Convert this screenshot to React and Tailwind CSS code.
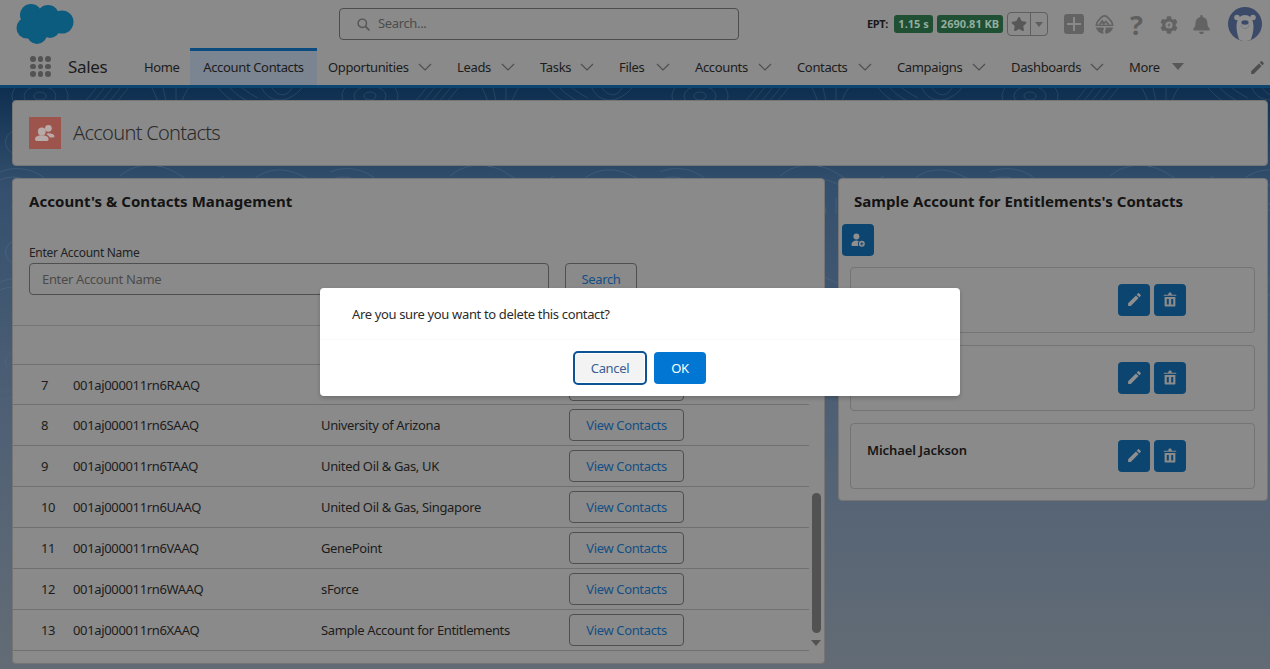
import React from "react";
import { FaBell, FaCog, FaStar } from "react-icons/fa";
import { MdEdit } from "react-icons/md";

const F = "font-['Noto_Sans','Open_Sans',sans-serif]";

function Chevron() {
  return (
    <svg width="14" height="8" viewBox="0 0 14 8" className="mt-[1px] shrink-0">
      <path d="M1 1l6 6 6-6" fill="none" stroke="#4f4f4f" strokeWidth="1.2" />
    </svg>
  );
}

function Logo() {
  return (
    <svg width="76" height="46" viewBox="0 0 76 46" className="shrink-0" fill="#0b5c7f">
      <circle cx="31" cy="14" r="11" />
      <circle cx="48" cy="15" r="11" />
      <circle cx="62" cy="21" r="11.5" />
      <circle cx="27" cy="27" r="10.5" />
      <circle cx="37" cy="33" r="10" />
      <circle cx="50" cy="27" r="10" />
      <rect x="28" y="14" width="30" height="16" />
    </svg>
  );
}

function Trailhead() {
  return (
    <svg width="19" height="19" viewBox="0 0 19 19" className="shrink-0">
      <path d="M9.5 0c2.6 0 3.7 1.8 5.6 3.7 2 2 3.4 4 3.4 7.3H.5c0-3.300 1.400-5.300 3.400-7.300C5.800 1.800 6.900 0 9.500 0z" fill="#626262" />
      <path d="M9.500 1.800c1.800 0 2.800 1.400 4.300 3 1.600 1.700 2.700 3 2.900 4.900H2.300c.2-1.900 1.300-3.200 2.900-4.900 1.500-1.600 2.500-3 4.300-3z" fill="#8a8a8a" />
      <path d="M3.500 9.700L7.300 4.600l1.800 2.600 1.500-2 4.500 4.500h-2.400L10.600 7.600 9.300 9.700H8L7.200 7.800 5.800 9.700z" fill="#626262" />
      <path d="M.8 12.500h7.700l.4 2.200-.9.500.6 3.500C4.900 18.400 2 16.300.8 12.500zM10.500 12.500h7.700c-1.200 3.800-4.100 5.900-7.800 6.200l-.4-3.500.9-.5z" fill="#626262" />
    </svg>
  );
}

function Bear() {
  return (
    <svg width="34" height="34" viewBox="0 0 34 34" className="shrink-0">
      <circle cx="17" cy="17" r="17" fill="#3b4a68" />
      <circle cx="9" cy="10.500" r="2.800" fill="#8f8f8f" />
      <circle cx="25" cy="10.500" r="2.800" fill="#8f8f8f" />
      <path d="M8.500 20c0-8 3.500-12 8.500-12s8.500 4 8.500 12c0 5-1.500 9-2.500 12.500-2 1-4 1.500-6 1.500s-4-.5-6-1.500C10 29 8.500 25 8.500 20z" fill="#8f8f8f" />
      <ellipse cx="17" cy="15.500" rx="3.600" ry="2.200" fill="#3b4a68" />
      <path d="M13 17.500c.5 3 2 4 4 4s3.500-1 4-4" fill="none" stroke="#6d7687" strokeWidth="0.8" />
    </svg>
  );
}

function Gear() {
  return (
    <div className="relative h-[18px] w-[18px]">
      <FaCog size={18} color="#626262" />
      <svg width="18" height="18" viewBox="0 0 18 18" className="absolute left-0 top-0">
        <circle cx="9" cy="9" r="3.600" fill="#8a8a8a" />
        <path d="M9.800 6.400L7.300 9.600h1.500L8.200 11.700l2.500-3.200H9.200z" fill="#626262" />
      </svg>
    </div>
  );
}

function Trash() {
  return (
    <svg width="14" height="15" viewBox="0 0 14 15">
      <path d="M5.200 1.500h3.600v1.200h3.900c.4 0 .6.3.6.6v.4H.7v-.4c0-.3.2-.6.6-.6h3.900z M5.900.6h2.200v.9H5.900z" fill="#8b8b8b" />
      <path fillRule="evenodd" d="M1.600 5h10.800v8.400c0 .7-.5 1.200-1.200 1.200H2.800c-.7 0-1.200-.5-1.200-1.200zM3.800 7v5.400h2V7zm4.400 0v5.400h2V7z" fill="#8b8b8b" />
    </svg>
  );
}

function AddContact() {
  return (
    <svg width="14" height="14" viewBox="0 0 14 14">
      <circle cx="5.400" cy="3.600" r="3" fill="#8f8f8f" />
      <path d="M.4 12c0-2.600 2-4.400 5-4.400 1 0 1.800.2 2.400.5-.6.8-.9 1.700-.9 2.700 0 .8.2 1.500.6 2.100H1.400c-.6 0-1-.3-1-.9z" fill="#8f8f8f" />
      <circle cx="10.800" cy="10.800" r="3" fill="#8f8f8f" />
      <path d="M10.800 9.200v3.200M9.200 10.800h3.200" stroke="#0c4570" strokeWidth="0.9" />
    </svg>
  );
}

function People() {
  return (
    <svg width="20" height="18" viewBox="0 0 20 18">
      <circle cx="13.400" cy="4.300" r="3.400" fill="#b8aaa8" />
      <path d="M13 9.200c3.500 0 6.500 1.300 6.500 3 0 .8-.6 1.200-1.400 1.200h-3.400c-.6-1.400-1.800-2.400-3.200-3.200.4-.5 1-1 1.500-1z" fill="#b8aaa8" />
      <circle cx="6.800" cy="7.400" r="3.900" fill="#b8aaa8" />
      <path d="M0 15.200c0-2.600 3-4 6.800-4s6.800 1.400 6.800 4c0 1.200-1 1.800-2 1.800H2c-1 0-2-.6-2-1.800z" fill="#b8aaa8" />
    </svg>
  );
}

function IconBtn({ children }) {
  return (
    <button className="flex h-8 w-8 items-center justify-center rounded-[4px] bg-[#0c4570]">
      {children}
    </button>
  );
}

function NavItem({ label, w }) {
  return (
    <div className={`flex h-full items-center justify-between pl-[11px] pr-[14px] ${w}`}>
      <span className="whitespace-nowrap pt-[2px]">{label}</span>
      <Chevron />
    </div>
  );
}

function ContactCard({ name }) {
  return (
    <div className="flex h-[66px] w-[405px] items-start justify-between rounded-[4px] border border-[#747474] pl-4 pr-[68px] pt-4">
      <div className="pt-[1px] text-[13px] font-semibold tracking-[-0.1px] text-[#161616]">{name}</div>
      <div className="flex gap-1">
        <IconBtn><MdEdit size={17} color="#8f8f8f" /></IconBtn>
        <IconBtn><Trash /></IconBtn>
      </div>
    </div>
  );
}

const rows = [
  ["7", "001aj000011rn6RAAQ", ""],
  ["8", "001aj000011rn6SAAQ", "University of Arizona"],
  ["9", "001aj000011rn6TAAQ", "United Oil & Gas, UK"],
  ["10", "001aj000011rn6UAAQ", "United Oil & Gas, Singapore"],
  ["11", "001aj000011rn6VAAQ", "GenePoint"],
  ["12", "001aj000011rn6WAAQ", "sForce"],
  ["13", "001aj000011rn6XAAQ", "Sample Account for Entitlements"],
];

function Contours() {
  return (
    <svg className="absolute left-0 top-0 h-[581px] w-[1270px]" viewBox="0 0 1270 581">
      <defs>
        <pattern id="topo" width="330" height="110" patternUnits="userSpaceOnUse">
          <g fill="none" stroke="#ffffff" strokeOpacity="0.09" strokeWidth="1">
            <ellipse cx="40" cy="8" rx="16" ry="10" />
            <ellipse cx="40" cy="8" rx="28" ry="18" />
            <ellipse cx="40" cy="8" rx="6" ry="4" />
            <path d="M85 14l16-20M93 14l16-20M101 14l16-20M109 14l16-20M117 14l16-20" />
            <path d="M150-4c4 8 8 16 8 20M162-4c2 8 4 16 4 20M176-2v18M190-2c-6 8-8 14-8 18" />
            <path d="M215-4c8 10 16 18 26 20M226-4c8 8 14 14 24 18M238-4c6 6 12 10 20 14" />
            <path d="M262 0c6 14 24 18 40 0M272 0c6 8 14 10 20 0" />
            <path d="M10 45c10-8 24-10 34 0s4 26-14 26S-2 56 10 45zM20 50c6-4 14-4 16 2s-2 12-10 12-12-8-6-14z" />
            <path d="M0 92c14-6 26-2 36 6s22 10 34 4M0 84c14-6 32-4 44 6s20 10 32 6" />
            <path d="M120 88c16-14 40-14 58-2s30 12 46 2M136 100c12-10 30-12 44-2s30 14 48 6" />
            <circle cx="120" cy="70" r="5" />
            <circle cx="160" cy="76" r="2.500" />
            <path d="M250 96c10-14 30-18 48-10s26 12 32 10M262 106c10-10 24-12 36-6s20 8 32 6" />
          </g>
        </pattern>
        <linearGradient id="fade" x1="0" y1="0" x2="0" y2="1">
          <stop offset="0" stopColor="#fff" stopOpacity="1" />
          <stop offset="0.3" stopColor="#fff" stopOpacity="0.75" />
          <stop offset="0.65" stopColor="#fff" stopOpacity="0" />
        </linearGradient>
        <mask id="m"><rect width="1270" height="581" fill="url(#fade)" /></mask>
      </defs>
      <rect width="1270" height="581" fill="url(#topo)" mask="url(#m)" />
    </svg>
  );
}

export default function App() {
  return (
    <div className={`${F} relative h-[669px] w-[1270px] overflow-hidden bg-[#8a8a8a] text-[13px] tracking-[-0.35px] text-[#1c1c1c]`}>
      {/* top bar */}
      <header className="flex h-[48px] items-center">
        <Logo />
        <div className="ml-[263px] flex h-8 w-[400px] items-center rounded-[4px] border border-[#4d4d4d] pl-[17px] text-[#4c4c4c]">
          <svg width="13" height="13" viewBox="0 0 13 13" className="mr-[8px] mt-[1px]">
            <circle cx="5.300" cy="5.300" r="4.200" fill="none" stroke="#555" strokeWidth="1.400" />
            <path d="M8.400 8.400l4 4" stroke="#555" strokeWidth="1.500" />
          </svg>
          <span>Search...</span>
        </div>
        <div className="ml-[128px] flex items-center">
          <span className="text-[11px] font-bold text-[#1a1a1a]">EPT:</span>
          <span className="ml-[6px] flex h-[18px] w-[39px] items-center justify-center rounded-[3px] bg-[#1f5033] text-[11px] font-bold tracking-normal text-[#93ad9f]">1.15 s</span>
          <span className="ml-[4px] flex h-[18px] w-[66px] items-center justify-center rounded-[3px] bg-[#1f5033] text-[11px] font-bold tracking-normal text-[#93ad9f]">2690.81 KB</span>
          <div className="ml-[4px] flex h-6 w-[41px] rounded-[4px] border border-[#5f5f5f]">
            <div className="flex w-[23px] items-center justify-center border-r border-[#5f5f5f]">
              <FaStar size={16} color="#575757" />
            </div>
            <div className="flex flex-1 items-center justify-center">
              <div className="h-0 w-0 border-x-[4px] border-t-[5px] border-x-transparent border-t-[#5f5f5f]" />
            </div>
          </div>
          <div className="relative ml-[16px] h-5 w-5 rounded-[3px] bg-[#636363]">
            <div className="absolute left-[3px] top-[9px] h-[2px] w-[14px] bg-[#8a8a8a]" />
            <div className="absolute left-[9px] top-[3px] h-[14px] w-[2px] bg-[#8a8a8a]" />
          </div>
          <div className="ml-[11px]"><Trailhead /></div>
          <span className="ml-[15px] w-[15px] text-center text-[27px] font-bold leading-none tracking-normal text-[#5f5f5f]">?</span>
          <div className="ml-[16px] mt-[1px]"><Gear /></div>
          <div className="ml-[14px]"><FaBell size={19} color="#626262" /></div>
          <div className="ml-[17px]"><Bear /></div>
        </div>
      </header>

      {/* nav */}
      <nav className="flex h-[37px] items-center">
        <div className="ml-[30px] grid w-[21px] grid-cols-3 gap-[2px]">
          {[0, 1, 2, 3, 4, 5, 6, 7, 8].map((i) => (
            <span key={i} className="h-[5.5px] w-[5.5px] rounded-full bg-[#535353]" />
          ))}
        </div>
        <span className="ml-[17px] w-[76px] text-[17px] text-[#1c1c1c]">Sales</span>
        <span className="w-[46px] pt-[2px]">Home</span>
        <div className="flex h-full w-[127px] items-center justify-center border-t-[3px] border-[#0b4b80] bg-[#7b8491]">
          <span className="whitespace-nowrap">Account Contacts</span>
        </div>
        <NavItem label="Opportunities" w="w-[129px]" />
        <NavItem label="Leads" w="w-[83px]" />
        <NavItem label="Tasks" w="w-[79px]" />
        <NavItem label="Files" w="w-[76px]" />
        <NavItem label="Accounts" w="w-[102px]" />
        <NavItem label="Contacts" w="w-[100px]" />
        <NavItem label="Campaigns" w="w-[114px]" />
        <NavItem label="Dashboards" w="w-[118px]" />
        <div className="flex h-full w-[66px] items-center pl-[11px]">
          <span className="pt-[2px]">More</span>
          <div className="mb-[1px] ml-[12px] h-0 w-0 border-x-[6px] border-t-[7px] border-x-transparent border-t-[#575757]" />
        </div>
        <div className="ml-[65px] mt-[2px]"><MdEdit size={17} color="#4f4f4f" /></div>
      </nav>

      {/* page */}
      <main className="relative h-[584px] border-t-[3px] border-[#0c4570] bg-[linear-gradient(180deg,#0f2f50_0,#34506e_100px,#4f6075_330px,#636c75_100%)] pl-3 pr-[2px] pt-3">
        <Contours />
        <div className="relative">
          <section className="flex h-[66px] items-center rounded-[4px] border border-[#757575] bg-[#8a8a8a] pl-4">
            <div className="flex h-8 w-8 items-center justify-center bg-[#9c544c]">
              <People />
            </div>
            <h1 className="ml-3 text-[20px] font-light tracking-[-0.7px] text-[#2a2a2a]">Account Contacts</h1>
          </section>

          <div className="mt-[12px] flex items-start gap-[13px]">
            {/* left column */}
            <div className="w-[813px]">
              <section className="h-[148px] rounded-t-[4px] border border-[#757575] bg-[#8a8a8a] pl-4 pt-[11px]">
                <h2 className="text-[15px] font-bold tracking-[0.05px] text-[#141414]">Account's &amp; Contacts Management</h2>
                <label className="mt-[32px] block text-[12px] leading-[16px] tracking-[-0.3px] text-[#222]">Enter Account Name</label>
                <div className="mt-[2px] flex gap-4">
                  <div className="flex h-8 w-[520px] items-center rounded-[4px] border border-[#4f4f4f] pl-3 pt-[2px] text-[#4b4b4b]">Enter Account Name</div>
                  <button className="h-8 w-[72px] rounded-[4px] border border-[#4f4f4f] pt-[2px] text-[#134f85]">Search</button>
                </div>
              </section>
              <section className="flex h-[338px] rounded-b-[4px] border border-t-0 border-[#757575] bg-[#8a8a8a]">
                <div className="w-[796px] pt-[38px]">
                  {rows.map(([n, id, name], i) => (
                    <div key={n} className={`flex h-[41px] items-center border-b border-[#707070] ${i === 0 ? "border-t" : ""}`}>
                      <span className="w-[60px] pl-7 pt-[2px]">{n}</span>
                      <span className="w-[248px] whitespace-nowrap pt-[2px]">{id}</span>
                      <span className="w-[248px] whitespace-nowrap pt-[2px]">{name}</span>
                      <button className="h-8 w-[115px] rounded-[4px] border border-[#4f4f4f] pt-[2px] text-[#134f85]">View Contacts</button>
                    </div>
                  ))}
                </div>
                <div className="ml-[2px] flex w-[10px] flex-col items-center pt-[167px]">
                  <div className="h-[140px] w-[9px] rounded-full bg-[#525252]" />
                  <div className="mt-[7px] h-0 w-0 border-x-[5px] border-t-[6px] border-x-transparent border-t-[#525252]" />
                </div>
              </section>
            </div>

            {/* right column */}
            <section className="h-[323px] w-[430px] rounded-[4px] border border-[#757575] bg-[#8a8a8a] pl-[3px] pt-[11px]">
              <h2 className="pl-[12px] text-[15px] font-bold tracking-[0.05px] text-[#141414]">Sample Account for Entitlements's Contacts</h2>
              <div className="mt-[11px]"><IconBtn><AddContact /></IconBtn></div>
              <div className="ml-2 mt-[11px] flex flex-col gap-3">
                <ContactCard name="" />
                <ContactCard name="" />
                <ContactCard name="Michael Jackson" />
              </div>
            </section>
          </div>
        </div>
      </main>

      {/* dialog */}
      <div className="absolute left-[320px] top-[288px] h-[108px] w-[640px] rounded-[4px] bg-white text-[#2c2c2c] shadow-[0_2px_4px_rgba(0,0,0,0.2)]">
        <div className="flex h-[52px] items-center border-b border-[#f8f8f8] pl-8 pt-[2px]">Are you sure you want to delete this contact?</div>
        <div className="ml-[-1px] flex items-center justify-center gap-[7px] pt-[11px]">
          <button className="h-[34px] w-[74px] rounded-[5px] border-2 border-[#0b5394] bg-[#f3f3f3] pt-[1px] text-[#3a5f94] shadow-[inset_0_0_0_1px_#fff]">Cancel</button>
          <button className="h-8 w-[52px] rounded-[4px] bg-[#0176d3] pt-[1px] text-white">OK</button>
        </div>
      </div>
    </div>
  );
}
